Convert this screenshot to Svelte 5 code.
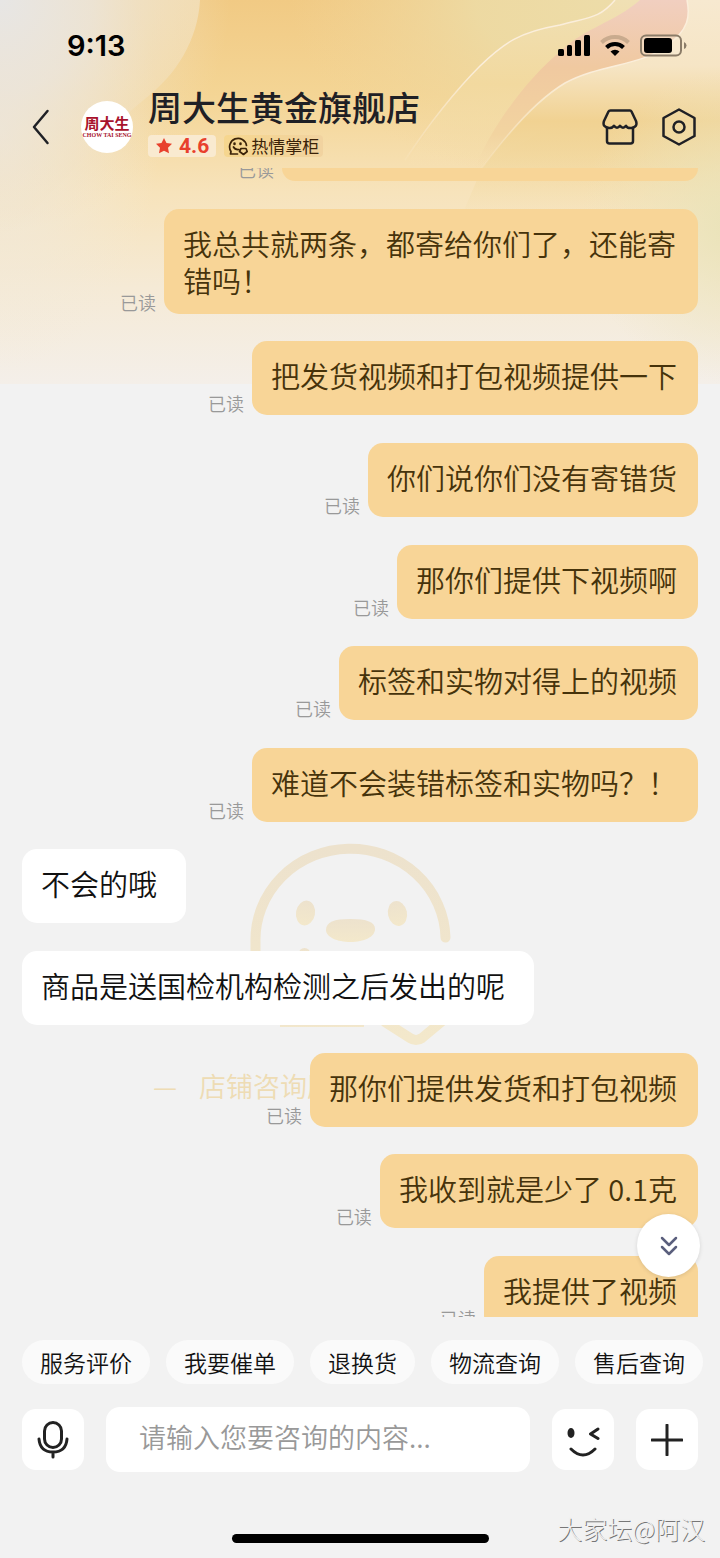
<script lang="ts">
  /** Customer service chat with a shop, seen from the buyer's side. */

  interface Message { text: string, mine: boolean, cut?: boolean }

  const shop = { name: '周大生黄金旗舰店', score: '4.6', badge: '热情掌柜' }

  const messages: Message[] = [
    { text: '', mine: true, cut: true }, // Scrolled away, only its bottom edge is left.
    { text: '我总共就两条，都寄给你们了，还能寄错吗！', mine: true },
    { text: '把发货视频和打包视频提供一下', mine: true },
    { text: '你们说你们没有寄错货', mine: true },
    { text: '那你们提供下视频啊', mine: true },
    { text: '标签和实物对得上的视频', mine: true },
    { text: '难道不会装错标签和实物吗？！', mine: true },
    { text: '不会的哦', mine: false },
    { text: '商品是送国检机构检测之后发出的呢', mine: false },
    { text: '那你们提供发货和打包视频', mine: true },
    { text: '我收到就是少了 0.1克', mine: true },
    { text: '我提供了视频', mine: true }
  ]

  const shortcuts = ['服务评价', '我要催单', '退换货', '物流查询', '售后查询']

  let draft = $state('')
</script>

<div class="app">
  <svg class="backdrop" viewBox="0 0 720 384" preserveAspectRatio="none" aria-hidden="true">
    <defs>
      <linearGradient id="base" x1="0" y1="0" x2="0" y2="1">
        <stop offset="0" stop-color="#f1ca84" />
        <stop offset="0.25" stop-color="#f4d595" />
        <stop offset="0.5" stop-color="#f7e3bb" />
        <stop offset="0.75" stop-color="#f5ead6" />
        <stop offset="1" stop-color="#f4efe9" />
      </linearGradient>
      <radialGradient id="pale" gradientUnits="userSpaceOnUse" cx="600" cy="0" r="310" gradientTransform="scale(1 0.6)">
        <stop offset="0" stop-color="#eddca8" />
        <stop offset="0.4" stop-color="#eddba5" stop-opacity="0.9" />
        <stop offset="1" stop-color="#f1d59a" stop-opacity="0" />
      </radialGradient>
      <radialGradient id="grey" gradientUnits="userSpaceOnUse" cx="0" cy="0" r="230">
        <stop offset="0" stop-color="#e7e6e5" />
        <stop offset="0.4" stop-color="#ebe4d9" stop-opacity="0.8" />
        <stop offset="1" stop-color="#f3dfb8" stop-opacity="0" />
      </radialGradient>
      <linearGradient id="left" x1="0" y1="0" x2="0" y2="1">
        <stop offset="0" stop-color="#f2dcb2" />
        <stop offset="0.4" stop-color="#f4dba9" />
        <stop offset="1" stop-color="#f6e1b8" stop-opacity="0" />
      </linearGradient>
      <radialGradient id="edge" gradientUnits="userSpaceOnUse" cx="0" cy="130" r="160" gradientTransform="translate(0 -65) scale(1 1.5)">
        <stop offset="0" stop-color="#eee8de" />
        <stop offset="1" stop-color="#f3ead8" stop-opacity="0" />
      </radialGradient>
      <radialGradient id="olive" gradientUnits="userSpaceOnUse" cx="740" cy="225" r="160">
        <stop offset="0" stop-color="#e9e3b8" />
        <stop offset="1" stop-color="#eee5c0" stop-opacity="0" />
      </radialGradient>
      <linearGradient id="wave" x1="0" y1="0" x2="0" y2="1">
        <stop offset="0" stop-color="#f0e0b4" />
        <stop offset="0.5" stop-color="#f2d99f" />
        <stop offset="1" stop-color="#f6e2b6" stop-opacity="0" />
      </linearGradient>
      <linearGradient id="pink" x1="0" y1="0" x2="0" y2="1">
        <stop offset="0" stop-color="#f1cfc0" />
        <stop offset="0.4" stop-color="#f0c9a0" />
        <stop offset="0.8" stop-color="#f2d4a0" />
        <stop offset="1" stop-color="#f4dcae" stop-opacity="0" />
      </linearGradient>
      <linearGradient id="right" x1="0" y1="0" x2="0" y2="1">
        <stop offset="0" stop-color="#f7e9d0" />
        <stop offset="0.3" stop-color="#f6e5c5" />
        <stop offset="0.55" stop-color="#f1d292" />
        <stop offset="1" stop-color="#f1dca6" stop-opacity="0" />
      </linearGradient>
      <linearGradient id="line" x1="0" y1="0" x2="0" y2="1">
        <stop offset="0" stop-color="#fbeedb" />
        <stop offset="0.4" stop-color="#fbeedb" />
        <stop offset="1" stop-color="#fbeedb" stop-opacity="0.1" />
      </linearGradient>
    </defs>
    <rect width="720" height="384" fill="url(#base)" />
    <rect width="720" height="384" fill="url(#pale)" />
    <path d="M0 0H200C198 40 176 75 146 98C110 126 60 190 0 240Z" fill="url(#left)" />
    <rect width="720" height="384" fill="url(#edge)" />
    <rect width="720" height="384" fill="url(#grey)" />
    <path d="M615 0C600 18 590 17 560 25C520 32 505 42 480 66C450 96 425 130 405 168H482L690 40V0Z" fill="url(#wave)" />
    <path d="M640 0C615 22 585 28 562 50C525 80 490 130 475 168H482C510 130 540 95 565 83C600 64 640 66 665 47C690 30 690 15 687 0Z" fill="url(#pink)" />
    <path d="M687 0C690 15 690 30 665 47C640 66 600 64 565 83C540 98 510 130 482 168L460 220H720V0Z" fill="url(#right)" />
    <rect width="720" height="384" fill="url(#olive)" />
    <g fill="none" stroke="url(#line)" stroke-width="1.5">
      <path d="M615 0C600 18 590 17 560 25C520 32 505 42 480 66C450 96 425 130 405 160" />
      <path d="M687 0C690 15 690 30 665 47C640 66 600 64 565 83C540 98 510 130 482 168" />
    </g>
  </svg>

  <div class="status">
    <span class="time">9:13</span>
    <svg width="130" height="24" viewBox="0 0 130 24" aria-hidden="true">
      <rect x="0" y="15" width="6" height="7" rx="1.5" />
      <rect x="9" y="11" width="5" height="11" rx="1.5" />
      <rect x="17" y="6" width="6" height="16" rx="1.5" />
      <rect x="26" y="1" width="6" height="21" rx="1.5" />
      <g fill="none" stroke="#000" stroke-width="4">
        <path d="M43.500 8.500A19.500 19.500 0 0 1 70.500 8.500" stroke="#c9ab8e" />
        <path d="M48.500 13.500A12 12 0 0 1 65.500 13.500" />
      </g>
      <path d="M57 22L52.500 17.500A6.500 6.500 0 0 1 61.500 17.500Z" />
      <rect x="83" y="1.500" width="40" height="20" rx="5" fill="#fbeeda" fill-opacity="0.4" stroke="#8b7c68" stroke-width="2" />
      <rect x="86" y="4" width="28" height="15" rx="3" />
      <path d="M126 8Q128.500 9 128.500 11.500T126 15Z" fill="#8b7c68" />
    </svg>
  </div>

  <header>
    <button class="plain" aria-label="返回">
      <svg width="18" height="36" viewBox="0 0 18 36"><path d="M15.500 2L2 18L15.500 34" /></svg>
    </button>
    <div class="avatar">
      <span class="brand">周大生</span>
      <span class="latin">CHOW TAI SENG</span>
    </div>
    <div class="shop">
      <h1>{shop.name}</h1>
      <div class="tags">
        <span class="tag score">
          <svg width="18" height="18" viewBox="0 0 18 18" aria-hidden="true">
            <path d="M9 1L11.500 6L17 6.800L13 10.700L14 16.300L9 13.700L4 16.300L5 10.700L1 6.800L6.500 6Z" />
          </svg>
          {shop.score}
        </span>
        <span class="tag badge">
          <svg width="20" height="20" viewBox="0 0 20 20" aria-hidden="true">
            <path d="M9.500 18H2.500L3 15.500A8.500 8.500 0 1 1 18.500 9.500M5.500 11Q7 14 11 13.500" />
            <path d="M6.500 7.500V8M12.500 7.500V8" stroke-width="2.500" />
            <path d="M15.500 18.500L11.500 15.500L13 12.500H18L19.200 15.500Z" />
          </svg>
          {shop.badge}
        </span>
      </div>
    </div>
    <button class="plain" aria-label="店铺">
      <svg width="36" height="36" viewBox="0 0 36 36">
        <path d="M8.500 1.500H28Q29 1.500 29.500 2.500L34 12Q36 18 29.500 19Q25.500 19.500 24 16.800Q21 20.500 18 16.800Q15 20.500 12 16.800Q10 19.500 7 19Q0 18 2 12L6.500 2.500Q7 1.500 8.500 1.500Z" />
        <path d="M5 19V32Q5 34.500 7.500 34.500H28.500Q31 34.500 31 32V19" />
      </svg>
    </button>
    <button class="plain" aria-label="设置">
      <svg width="36" height="38" viewBox="0 0 36 38">
        <path d="M18 1.500L33.500 10V28L18 36.500L2.500 28V10Z" /><circle cx="18" cy="19" r="5.500" />
      </svg>
    </button>
  </header>

  <main>
    <div class="mark" aria-hidden="true">
      <svg width="201" height="202" viewBox="0 0 201 202">
        <defs>
          <linearGradient id="cream" x1="0" y1="0" x2="0" y2="1">
            <stop offset="0" stop-color="#ede2cd" />
            <stop offset="1" stop-color="#f3e8cb" />
          </linearGradient>
        </defs>
        <path class="outline" d="M195.500 93.500A95 91 0 0 0 5.500 98V170M135 178L160 194Q166 198 172 194L196 174" />
        <ellipse cx="55.500" cy="69" rx="9.500" ry="12.500" transform="rotate(10 55.500 69)" />
        <ellipse cx="147.500" cy="69.500" rx="9.500" ry="12.500" transform="rotate(-12 147.500 69.500)" />
        <path d="M76 86C76 78 84 75 100.500 75C117 75 125 78 125 85C125 93 114 98 100.500 98C87 98 76 93 76 86Z" />
        <circle cx="54.500" cy="110" r="6" />
        <rect x="30" y="179" width="84" height="4" />
      </svg>
      <p><span>—</span><span>店铺咨询服务</span></p>
    </div>
    <ul>
      {#each messages as message}
        <li class:mine={message.mine}>
          {#if message.mine}<small>已读</small>{/if}
          <p class="bubble" class:cut={message.cut}>{message.text}</p>
        </li>
      {/each}
    </ul>
    <button class="latest" aria-label="最新消息">
      <svg width="18" height="20" viewBox="0 0 18 20"><path d="M2 2L9 9L16 2M2 11L9 18L16 11" /></svg>
    </button>
  </main>

  <footer>
    <nav>
      {#each shortcuts as shortcut}
        <button class="chip">{shortcut}</button>
      {/each}
    </nav>
    <div class="composer">
      <button class="key" aria-label="语音">
        <svg width="32" height="38" viewBox="0 0 32 38">
          <rect x="7.500" y="1.500" width="17" height="25" rx="8.500" />
          <path d="M2 18Q3 31 16 31T30 18M16 31V36" />
        </svg>
      </button>
      <input type="text" aria-label="消息" placeholder="请输入您要咨询的内容..." bind:value={draft} />
      <button class="key" aria-label="表情">
        <svg width="34" height="34" viewBox="0 0 34 34">
          <ellipse class="eye" cx="5" cy="10" rx="3.500" ry="5" />
          <path d="M32 6L24.500 11L32 15.500M5 26Q17 38 29 26" />
        </svg>
      </button>
      <button class="key" aria-label="更多">
        <svg width="32" height="32" viewBox="0 0 32 32"><path d="M16 1V31M1 16H31" /></svg>
      </button>
    </div>
    <div class="home"></div>
    <span class="credit">大家坛@阿汉</span>
  </footer>
</div>

<style>
  :global(body) {
    margin: 0;
    background: #f2f2f2;
  }
  .app {
    position: relative;
    display: flex;
    flex-direction: column;
    height: 100vh;
    overflow: hidden;
    font-family: "Noto Sans CJK SC", sans-serif;
    background: #f2f2f2;
  }
  .app > * {
    position: relative;
    box-sizing: border-box;
  }
  .app > .backdrop {
    position: absolute;
    top: 0;
    left: 0;
    width: 100%;
    height: 384px;
  }
  button {
    padding: 0;
    border: 0;
    font: inherit;
    color: inherit;
    cursor: pointer;
  }
  button svg {
    display: block;
    fill: none;
    stroke: #1f2025;
    stroke-width: 2.5;
    stroke-linecap: round;
    stroke-linejoin: round;
  }
  h1, p, ul {
    margin: 0;
    padding: 0;
  }

  .status {
    display: flex;
    flex: none;
    align-items: center;
    justify-content: space-between;
    height: 88px;
    padding: 4px 32px 0 67px;
  }
  .time {
    font: 600 29px/36px Inter, sans-serif;
  }

  header {
    display: flex;
    flex: none;
    align-items: center;
    height: 80px;
    padding: 0 23px 2px 32px;
  }
  .plain {
    background: none;
  }
  .plain + .plain {
    margin-left: 23px;
  }
  .avatar {
    display: flex;
    flex: none;
    flex-direction: column;
    align-items: center;
    justify-content: center;
    width: 52px;
    height: 52px;
    margin: 0 15px 0 31px;
    border-radius: 50%;
    background: #fff;
    color: #a8122c;
    white-space: nowrap;
  }
  .brand {
    font: 700 15px/16px "Noto Sans CJK SC", sans-serif;
  }
  .latin {
    font: 700 6px/8px "Liberation Serif", serif;
  }
  .shop {
    flex: 1;
    align-self: flex-start;
    min-width: 0;
  }
  h1 {
    font-size: 34px;
    font-weight: 500;
    line-height: 38px;
    color: #1f2025;
    white-space: nowrap;
  }
  .tags {
    display: flex;
    gap: 8px;
    margin-top: 9px;
  }
  .tag {
    display: flex;
    align-items: center;
    height: 22px;
    border-radius: 4px;
  }
  .score {
    gap: 6px;
    padding: 0 7px;
    background: #f9ead0;
    font: 700 21px/22px Roboto, sans-serif;
    color: #e8402c;
  }
  .score svg {
    fill: #e8402c;
  }
  .badge {
    gap: 3px;
    padding: 0 4px;
    background: linear-gradient(90deg, #f6d68e, #f1d3a0);
    font-size: 17px;
    line-height: 22px;
    color: #3a2208;
  }
  .badge svg {
    fill: none;
    stroke: #3a2208;
    stroke-width: 1.7;
    stroke-linejoin: round;
    stroke-linecap: round;
  }

  main {
    display: flex;
    flex: 1;
    min-height: 0;
    overflow: hidden;
  }
  .mark {
    position: absolute;
    top: 676px;
    left: calc(50% - 110px);
    fill: url(#cream);
  }
  .mark svg {
    display: block;
    overflow: visible;
  }
  .outline {
    fill: none;
    stroke: url(#cream);
    stroke-width: 10;
    stroke-linecap: round;
    stroke-linejoin: round;
  }
  .mark p {
    display: flex;
    gap: 22px;
    margin: 22px 0 0 -97px;
    font-size: 27px;
    font-weight: 350;
    line-height: 36px;
    color: #eedcb4;
    white-space: nowrap;
  }
  ul {
    position: relative;
    display: flex;
    flex: 1;
    flex-direction: column;
    justify-content: space-between;
    margin-bottom: -13px;
    padding: 0 22px;
    list-style: none;
  }
  li {
    display: flex;
    flex: none;
    align-items: flex-end;
    gap: 8px;
  }
  li.mine {
    justify-content: flex-end;
  }
  small {
    flex: none;
    height: 22px;
    margin-top: -9px;
    font-size: 18px;
    font-weight: 350;
    line-height: 20px;
    color: #999;
  }
  .bubble {
    box-sizing: border-box;
    max-width: 79%;
    min-height: 74px;
    padding: 16px 29px 15px 19px;
    border-radius: 15px;
    background: #fff;
    font-size: 29px;
    font-weight: 350;
    line-height: 37px;
    color: #111;
  }
  .mine .bubble {
    padding: 16px 21px 15px 19px;
    background: #f8d597;
    color: #46330b;
  }
  .mine .bubble.cut {
    width: 416px;
    min-height: 13px;
    padding: 0;
    border-radius: 0 0 15px 15px;
  }
  .latest {
    position: absolute;
    right: 20px;
    bottom: 40px;
    display: grid;
    place-items: center;
    width: 63px;
    height: 63px;
    border-radius: 50%;
    background: #fff;
    box-shadow: 0 1px 4px rgb(0 0 0 / 0.12);
  }
  .latest svg {
    stroke: #5a5f7d;
  }

  footer {
    flex: none;
    padding: 23px 22px 15px;
  }
  nav {
    display: flex;
    gap: 16px;
    margin-right: -22px;
    overflow: hidden;
  }
  .chip {
    flex: none;
    height: 44px;
    padding: 0 18px;
    border-radius: 22px;
    background: #fafafa;
    font-size: 23px;
    font-weight: 350;
    line-height: 44px;
    color: #111;
  }
  .composer {
    display: flex;
    align-items: center;
    gap: 22px;
    margin-top: 23px;
  }
  .key {
    display: grid;
    flex: none;
    place-items: center;
    width: 62px;
    height: 61px;
    border-radius: 14px;
    background: #fff;
  }
  .key svg {
    stroke: #222;
    stroke-width: 3;
  }
  .key .eye {
    fill: #222;
    stroke: none;
  }
  input {
    flex: 1;
    box-sizing: border-box;
    min-width: 0;
    height: 65px;
    padding: 0 33px 6px;
    border: 0;
    border-radius: 14px;
    outline: none;
    background: #fff;
    font: 350 27px/36px "Noto Sans CJK SC", sans-serif;
  }
  input::placeholder {
    color: #999;
    opacity: 1;
  }
  .home {
    width: 257px;
    height: 9px;
    margin: 62px auto 0;
    border-radius: 5px;
    background: #000;
  }
  .credit {
    position: absolute;
    right: 15px;
    bottom: 12px;
    font-size: 25px;
    font-weight: 300;
    line-height: 36px;
    color: #f0f0f0;
    text-shadow: 1px 1px 0 #777;
  }
</style>
